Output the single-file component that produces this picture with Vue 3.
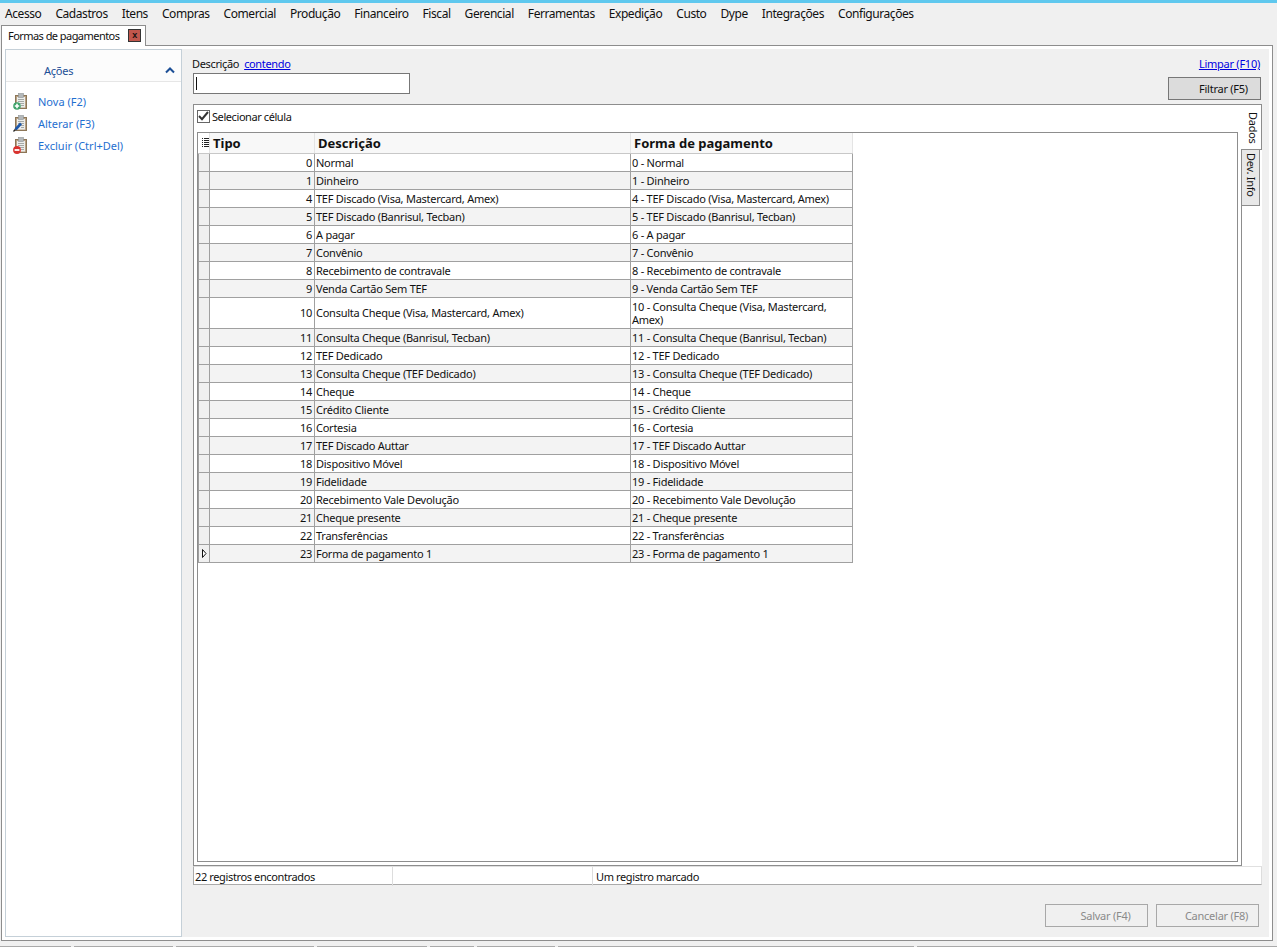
<script setup>
const menus = ['Acesso', 'Cadastros', 'Itens', 'Compras', 'Comercial', 'Produção', 'Financeiro', 'Fiscal', 'Gerencial', 'Ferramentas', 'Expedição', 'Custo', 'Dype', 'Integrações', 'Configurações']

const rows = [
  [0, 'Normal'],
  [1, 'Dinheiro'],
  [4, 'TEF Discado (Visa, Mastercard, Amex)'],
  [5, 'TEF Discado (Banrisul, Tecban)'],
  [6, 'A pagar'],
  [7, 'Convênio'],
  [8, 'Recebimento de contravale'],
  [9, 'Venda Cartão Sem TEF'],
  [10, 'Consulta Cheque (Visa, Mastercard, Amex)'],
  [11, 'Consulta Cheque (Banrisul, Tecban)'],
  [12, 'TEF Dedicado'],
  [13, 'Consulta Cheque (TEF Dedicado)'],
  [14, 'Cheque'],
  [15, 'Crédito Cliente'],
  [16, 'Cortesia'],
  [17, 'TEF Discado Auttar'],
  [18, 'Dispositivo Móvel'],
  [19, 'Fidelidade'],
  [20, 'Recebimento Vale Devolução'],
  [21, 'Cheque presente'],
  [22, 'Transferências'],
  [23, 'Forma de pagamento 1'],
]

const actions = [
  { label: 'Nova (F2)', kind: 'add' },
  { label: 'Alterar (F3)', kind: 'edit' },
  { label: 'Excluir (Ctrl+Del)', kind: 'del' },
]

const bottomTabs = [71, 99, 138, 110, 44, 78, 356, 360]
</script>

<template>
  <div class="app">
    <div class="topline"></div>
    <nav class="menu">
      <span v-for="m in menus" :key="m">{{ m }}</span>
    </nav>

    <div class="tabstrip">
      <div class="tab">
        <span>Formas de pagamentos</span>
        <span class="close">x</span>
      </div>
    </div>

    <main class="panel">
      <aside class="sidebar">
        <div class="side-head">
          <span>Ações</span>
          <svg width="10" height="7" viewBox="0 0 10 7" fill="none">
            <path d="M1 5.5 5 1.5 9 5.5" stroke="#1c4f96" stroke-width="2" />
          </svg>
        </div>
        <ul class="actions">
          <li v-for="a in actions" :key="a.kind">
            <svg width="15" height="17" viewBox="0 0 15 17">
              <rect x="2.5" y="2.5" width="11" height="13" fill="#b9a184" stroke="#8c7657" />
              <rect x="4" y="4" width="8" height="10.5" fill="#eceeec" />
              <rect x="5.5" y="0.5" width="5" height="4" fill="#b4b8ba" stroke="#8f9496" stroke-width="0.6" />
              <path d="M5 6.5h6M5 8.5h6M7 10.5h4M8 12.5h3" stroke="#a5a8a5" stroke-width="1" />
              <template v-if="a.kind === 'add'">
                <circle cx="4" cy="13" r="3.8" fill="#3fa36b" />
                <path d="M4 10.8v4.4M1.8 13h4.4" stroke="#fff" stroke-width="1.6" />
              </template>
              <template v-else-if="a.kind === 'edit'">
                <path d="M2.5 14.5 8 8.5" stroke="#1d57a8" stroke-width="2.6" />
                <path d="M0.5 16.5 2.2 14.5" stroke="#222" stroke-width="1.2" />
              </template>
              <template v-else>
                <circle cx="4" cy="13" r="3.9" fill="#d8322e" />
                <path d="M1.6 13h4.8" stroke="#fff" stroke-width="1.8" />
              </template>
            </svg>
            <span>{{ a.label }}</span>
          </li>
        </ul>
      </aside>

      <section class="content">
        <div class="filters">
          <div class="filter-left">
            <div class="filter-label">
              <span>Descrição</span>
              <a href="#">contendo</a>
            </div>
            <div class="filter-input"><i></i></div>
          </div>
          <div class="filter-right">
            <a href="#">Limpar (F10)</a>
            <button type="button">Filtrar (F5)</button>
          </div>
        </div>

        <div class="tabbed">
          <div class="data-page">
            <label class="check">
              <span class="box">
                <svg width="11" height="10" viewBox="0 0 11 10" fill="none">
                  <path d="M1 5 4 8.2 10 1" stroke="#333" stroke-width="2" />
                </svg>
              </span>
              Selecionar célula
            </label>
            <div class="grid-wrap">
              <table class="grid">
                <thead>
                  <tr>
                    <th class="ind">
                      <svg width="7" height="9" viewBox="0 0 7 9">
                        <path d="M0 .5h1M0 2.5h1M0 4.5h1M0 6.5h1M0 8.5h1M2 .5h5M2 2.5h5M2 4.5h5M2 6.5h5M2 8.5h5" stroke="#222" stroke-width="1" />
                      </svg>
                    </th>
                    <th class="c-tipo">Tipo</th>
                    <th class="c-desc">Descrição</th>
                    <th class="c-forma">Forma de pagamento</th>
                  </tr>
                </thead>
                <tbody>
                  <tr v-for="(r, i) in rows" :key="r[0]" :class="{ odd: i % 2 === 1 }">
                    <td class="ind">
                      <svg v-if="r[0] === 23" width="5" height="9" viewBox="0 0 5 9">
                        <path d="M.5 .5 4 4.5 .5 8.5Z" fill="#fff" stroke="#111" />
                      </svg>
                    </td>
                    <td class="num">{{ r[0] }}</td>
                    <td>{{ r[1] }}</td>
                    <td>{{ r[0] }} - {{ r[1] }}</td>
                  </tr>
                </tbody>
              </table>
            </div>
          </div>
          <div class="vtabs">
            <div class="vtab active">Dados</div>
            <div class="vtab">Dev. Info</div>
          </div>
        </div>

        <div class="status">
          <div>22 registros encontrados</div>
          <div></div>
          <div>Um registro marcado</div>
        </div>

        <div class="buttons">
          <button type="button" disabled>Salvar (F4)</button>
          <button type="button" disabled>Cancelar (F8)</button>
        </div>
      </section>
    </main>

    <div class="bottom">
      <i v-for="(w, i) in bottomTabs" :key="i" :style="{ width: w + 'px' }"></i>
    </div>
  </div>
</template>

<style>
html, body {
  margin: 0;
  background: #f0f0f0;
}
</style>

<style scoped>
.app {
  width: 1277px;
  height: 947px;
  overflow: hidden;
  display: flex;
  flex-direction: column;
  background: #f0f0f0;
  color: #111;
  font: 11px/13px "Noto Sans", sans-serif;
  letter-spacing: -0.25px;
}

.topline {
  height: 3px;
  background: #5fc8ee;
}

.menu {
  height: 21px;
  display: flex;
  align-items: center;
  gap: 14px;
  padding-left: 5px;
  font-size: 12px;
  letter-spacing: -0.43px;
}

.tabstrip {
  height: 21px;
  margin: 0 4px 0 1px;
  display: flex;
  align-items: flex-end;
  border-bottom: 1px solid #8d8d8d;
}

.tab {
  height: 21px;
  width: 145px;
  box-sizing: border-box;
  margin-bottom: -1px;
  padding: 0 4px 2px 6px;
  display: flex;
  align-items: center;
  justify-content: space-between;
  white-space: nowrap;
  letter-spacing: -0.55px;
  background: #fff;
  border: 1px solid #8d8d8d;
  border-bottom: none;
}

.close {
  width: 11px;
  height: 11px;
  border: 1px solid #333;
  background: #c0564c;
  color: #111;
  font: bold 9px/10px "Liberation Sans", sans-serif;
  text-align: center;
}

.panel {
  height: 895px;
  margin: 0 4px 0 1px;
  box-sizing: border-box;
  display: flex;
  background: #fff;
  border: 1px solid #8d8d8d;
  border-top: none;
  padding: 3px;
}

.sidebar {
  width: 177px;
  box-sizing: border-box;
  background: #fff;
  border: 1px solid #c5d0d8;
}

.side-head {
  height: 32px;
  box-sizing: border-box;
  padding: 10px 6px 0 38px;
  display: flex;
  justify-content: space-between;
  align-items: center;
  color: #1c4f96;
  background: #fcfcfc;
  border-bottom: 1px solid #e6e6e6;
}

.actions {
  list-style: none;
  margin: 8px 0 0;
  padding: 0 0 0 7px;
  color: #1f6fd0;
  letter-spacing: 0;
}

.actions li {
  height: 22px;
  display: flex;
  align-items: center;
  gap: 10px;
}

.content {
  flex: 1;
  min-width: 0;
  padding: 5px 7px 0 11px;
  display: flex;
  flex-direction: column;
  background: #f0f0f0;
}

.filters {
  display: flex;
  justify-content: space-between;
  height: 50px;
}

.filter-label {
  height: 19px;
  display: flex;
  gap: 5px;
  align-items: center;
  margin-left: -1px;
  letter-spacing: -0.35px;
}

a {
  color: #0000e0;
  text-decoration: underline;
}

.filter-input {
  width: 217px;
  height: 21px;
  box-sizing: border-box;
  background: #fff;
  border: 1px solid #777;
  padding: 3px 2px;
}

.filter-input i {
  display: block;
  width: 1px;
  height: 13px;
  background: #111;
}

.filter-right {
  display: flex;
  flex-direction: column;
  align-items: flex-end;
  gap: 7px;
  padding-top: 3px;
  margin-right: 1px;
}

.filter-right a {
  margin-right: 1px;
}

.filter-right button {
  width: 93px;
  height: 23px;
  padding: 0 0 0 18px;
  font: inherit;
  letter-spacing: inherit;
  color: #111;
  background: #dcdcdc;
  border: 1px solid #777;
}

.tabbed {
  height: 762px;
  box-sizing: border-box;
  display: flex;
  background: #fff;
  border-top: 1px solid #8d8d8d;
  border-left: 1px solid #8d8d8d;
}

.data-page {
  flex: 1;
  min-width: 0;
  padding: 1px 3px 3px;
  display: flex;
  flex-direction: column;
  border-right: 1px solid #8d8d8d;
  border-bottom: 1px solid #8d8d8d;
}

.check {
  height: 20px;
  display: flex;
  align-items: center;
  gap: 2px;
  margin-bottom: 6px;
  letter-spacing: -0.42px;
}

.box {
  width: 11px;
  height: 11px;
  border: 1px solid #666;
  display: flex;
  align-items: center;
  justify-content: center;
}

.grid-wrap {
  flex: 1;
  border: 1px solid #8d8d8d;
}

.grid {
  border-collapse: collapse;
  table-layout: fixed;
  width: 654px;
}

.grid th,
.grid td {
  box-sizing: border-box;
}

.grid th {
  height: 20px;
  padding: 1px 0 0 3px;
  text-align: left;
  font-size: 13px;
  font-weight: bold;
  letter-spacing: 0;
  background: #f8f8f8;
  border-right: 1px solid #e4e4e4;
  border-bottom: 1px solid #c8c8c8;
}

.grid td {
  height: 18px;
  padding: 2px 1px;
  background: #fff;
  border: 1px solid #a0a0a0;
}

.grid tr.odd td {
  background: #f3f3f3;
}

.grid td.ind,
.grid tr.odd td.ind {
  background: #f0f0f0;
  padding: 0 0 0 3px;
  line-height: 9px;
}

.grid th.ind {
  padding: 0 0 0 3px;
  background: #fff;
}

.grid td.num {
  text-align: right;
  padding-right: 2px;
}

.ind {
  width: 11px;
}

.c-tipo {
  width: 105px;
}

.c-desc {
  width: 316px;
}

.c-forma {
  width: 222px;
}

.vtabs {
  width: 20px;
  display: flex;
  flex-direction: column;
}

.vtab {
  writing-mode: vertical-rl;
  height: 56px;
  width: 18px;
  box-sizing: border-box;
  padding-top: 3px;
  border-right: 1px solid #8d8d8d;
  border-bottom: 1px solid #8d8d8d;
  background: #e8e8e8;
  line-height: 15px;
}

.vtab.active {
  height: 45px;
  width: 21px;
  margin-left: -1px;
  padding-top: 7px;
  padding-left: 2px;
  background: #fff;
}

.status {
  height: 19px;
  flex: none;
  box-sizing: border-box;
  display: grid;
  grid-template-columns: 199px 200px 1fr;
  letter-spacing: -0.37px;
  background: #fff;
  border-top: 1px solid #e0e0e0;
  border-bottom: 1px solid #aaa;
  border-left: 1px solid #aaa;
  border-right: 1px solid #ddd;
}

.status div {
  padding-left: 1px;
  line-height: 19px;
  border-right: 1px solid #ddd;
}

.status div:last-child {
  padding-left: 3px;
  border-right: none;
}

.buttons {
  display: flex;
  justify-content: flex-end;
  gap: 8px;
  margin-top: 19px;
  margin-right: 3px;
}

.buttons button {
  width: 103px;
  height: 23px;
  padding: 0 0 0 18px;
  font: inherit;
  letter-spacing: inherit;
  color: #8a8a8a;
  background: #f0f0f0;
  border: 1px solid #a8a8a8;
}

.bottom {
  margin-top: 5px;
  display: flex;
  gap: 3px;
}

.bottom i {
  height: 1px;
  background: #aaa;
}
</style>
